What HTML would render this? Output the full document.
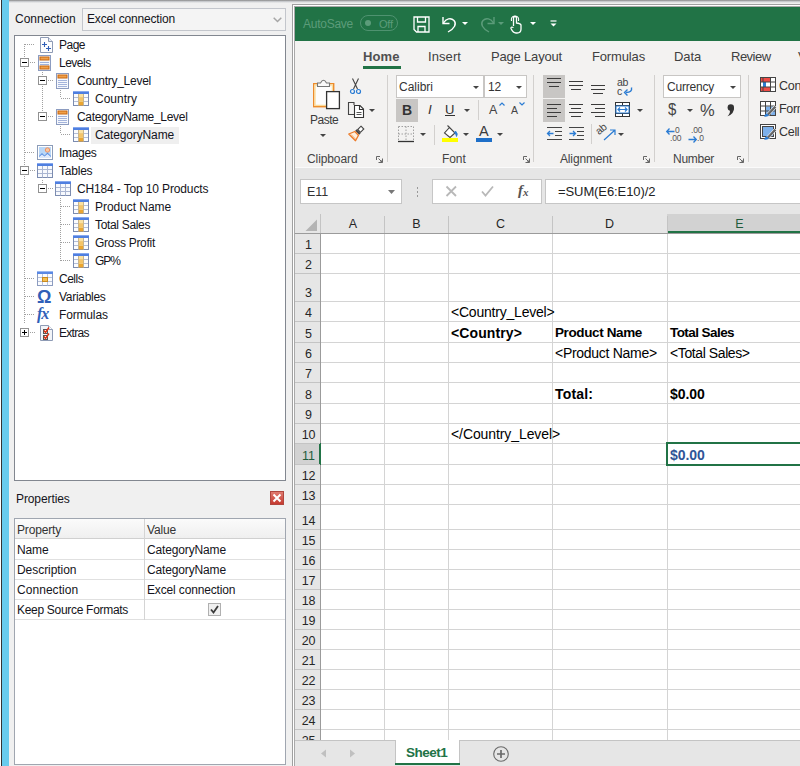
<!DOCTYPE html>
<html><head><meta charset="utf-8">
<style>
*{box-sizing:border-box;margin:0;padding:0}
html,body{width:800px;height:766px;overflow:hidden;background:#f0f0f0;font-family:"Liberation Sans",sans-serif;font-size:12px;color:#141420}
.a{position:absolute}
.t{position:absolute;white-space:nowrap;line-height:1}
svg{position:absolute;overflow:visible}
.hd{height:1px;background:repeating-linear-gradient(90deg,#a0a0a0 0 1px,transparent 1px 2px)}
.vd{width:1px;background:repeating-linear-gradient(180deg,#a0a0a0 0 1px,transparent 1px 2px)}
.x{font-family:"Liberation Sans",sans-serif;color:#262626}
.c{font-family:"Liberation Sans",sans-serif;font-size:14px;color:#000;letter-spacing:-0.3px}
.rh{position:absolute;left:296px;width:25px;text-align:center;font-size:12.5px;color:#262626;line-height:16px;letter-spacing:-0.1px}
</style></head><body>
<!-- LEFT PANEL -->
<div class="a" style="left:0;top:0;width:293px;height:766px;background:#f0f0f0"></div>
<div class="a" style="left:9px;top:0;width:791px;height:3px;background:linear-gradient(#858585,#c4c6ca 45%,#f0f0f0)"></div>
<div class="a" style="left:0;top:0;width:1px;height:766px;background:#fff"></div>
<div class="a" style="left:1px;top:0;width:1px;height:766px;background:#333"></div>
<div class="a" style="left:2px;top:0;width:7px;height:766px;background:#68cbed"></div>
<div class="t" style="left:15px;top:13px">Connection</div>
<div class="a" style="left:82px;top:8px;width:204px;height:23px;border:1px solid #c3c6cc;background:#f4f4f4"></div>
<div class="t" style="left:87px;top:13px;letter-spacing:-0.17px">Excel connection</div>
<svg style="left:273px;top:17px" width="9" height="6"><path d="M0.7 0.7 L4.5 4.5 L8.3 0.7" fill="none" stroke="#a6a6a6" stroke-width="1.5"/></svg>
<div class="a" style="left:14px;top:35px;width:272px;height:446px;border:1px solid #828790;background:#fff"></div>
<div class="a" style="left:91px;top:127px;width:88px;height:17px;background:#efefef"></div>
<div class="a vd" style="left:24px;top:44px;height:280px"></div>
<div class="a vd" style="left:42px;top:72px;height:40px"></div>
<div class="a vd" style="left:42px;top:112px;height:0px"></div>
<div class="a vd" style="left:60px;top:90px;height:8px"></div>
<div class="a vd" style="left:60px;top:126px;height:8px"></div>
<div class="a vd" style="left:42px;top:180px;height:4px"></div>
<div class="a vd" style="left:60px;top:198px;height:63px"></div>
<div class="a hd" style="left:25px;top:44px;width:9px"></div>
<svg style="left:39.5px;top:37px" width="13" height="16" viewBox="0 0 13 16"><path d="M0.5 0.5 H8.5 L12.5 4.5 V15.5 H0.5 Z" fill="#fdfdfe" stroke="#8e9bb5"/><path d="M8.5 0.5 V4.5 H12.5" fill="#e8ecf4" stroke="#8e9bb5"/><path d="M2 7.5 H7 M4.5 5 V10 M6 11.5 H11 M8.5 9 V14" stroke="#2f5fb8" stroke-width="1.1" fill="none"/></svg>
<div class="t" style="left:59px;top:36px;line-height:18px;letter-spacing:-0.5px">Page</div>
<div class="a hd" style="left:30px;top:62px;width:5px"></div>
<div class="a" style="left:20px;top:58px;width:9px;height:9px;border:1px solid #919191;background:#fff"></div><div class="a" style="left:22px;top:62px;width:5px;height:1px;background:#000"></div>
<svg style="left:38px;top:55px" width="13" height="16" viewBox="0 0 13 16"><rect x="0.5" y="0.5" width="12" height="15" fill="#f4f7fc" stroke="#8c9cc0"/><rect x="2" y="2" width="9" height="3" fill="#f0a04a" stroke="#c8660e" stroke-width="1"/><rect x="2" y="11" width="9" height="3" fill="#f0a04a" stroke="#c8660e" stroke-width="1"/><path d="M2 7.5 H11 M2 9.5 H11" stroke="#9fb2dc" stroke-width="1"/></svg>
<div class="t" style="left:59px;top:54px;line-height:18px;letter-spacing:-0.5px">Levels</div>
<div class="a hd" style="left:48px;top:80px;width:5px"></div>
<div class="a" style="left:38px;top:76px;width:9px;height:9px;border:1px solid #919191;background:#fff"></div><div class="a" style="left:40px;top:80px;width:5px;height:1px;background:#000"></div>
<svg style="left:56px;top:73px" width="13" height="16" viewBox="0 0 13 16"><rect x="0.5" y="0.5" width="12" height="15" fill="#f6f8fc" stroke="#8c9cc0"/><rect x="2" y="2" width="9" height="3" fill="#f0a04a" stroke="#c8660e" stroke-width="1"/><path d="M2 7.5 H11 M2 9.5 H11 M2 11.5 H11 M2 13.5 H11" stroke="#a4b4dc" stroke-width="1"/></svg>
<div class="t" style="left:77px;top:72px;line-height:18px;letter-spacing:-0.26px">Country_Level</div>
<div class="a hd" style="left:61px;top:98px;width:9px"></div>
<svg style="left:73px;top:91px" width="16" height="15" viewBox="0 0 16 15"><rect x="0.5" y="0.5" width="15" height="14" fill="#fbfcfe" stroke="#7c8cb0"/><path d="M1 6.5 H15 M1 10.5 H15" stroke="#b4bed6" stroke-width="1" fill="none"/><rect x="5.5" y="3" width="5" height="3.5" fill="#fae0a0"/><rect x="5.5" y="6.5" width="5" height="4" fill="#f4c468"/><rect x="5.5" y="10.5" width="5" height="4" fill="#eba530"/><path d="M5.5 3 V14.5 M10.5 3 V14.5" stroke="#c8b48c" stroke-width="1" fill="none"/><path d="M6 6.5 H10 M6 10.5 H10" stroke="#f0c878" stroke-width="1" fill="none"/><rect x="0" y="0" width="16" height="3" fill="#4f7fe0"/><rect x="0" y="0" width="16" height="1" fill="#86a8ee"/></svg>
<div class="t" style="left:95px;top:90px;line-height:18px;letter-spacing:0px">Country</div>
<div class="a hd" style="left:48px;top:116px;width:5px"></div>
<div class="a" style="left:38px;top:112px;width:9px;height:9px;border:1px solid #919191;background:#fff"></div><div class="a" style="left:40px;top:116px;width:5px;height:1px;background:#000"></div>
<svg style="left:56px;top:109px" width="13" height="16" viewBox="0 0 13 16"><rect x="0.5" y="0.5" width="12" height="15" fill="#f6f8fc" stroke="#8c9cc0"/><rect x="2" y="2" width="9" height="3" fill="#f0a04a" stroke="#c8660e" stroke-width="1"/><path d="M2 7.5 H11 M2 9.5 H11 M2 11.5 H11 M2 13.5 H11" stroke="#a4b4dc" stroke-width="1"/></svg>
<div class="t" style="left:77px;top:108px;line-height:18px;letter-spacing:-0.31px">CategoryName_Level</div>
<div class="a hd" style="left:61px;top:134px;width:9px"></div>
<svg style="left:73px;top:127px" width="16" height="15" viewBox="0 0 16 15"><rect x="0.5" y="0.5" width="15" height="14" fill="#fbfcfe" stroke="#7c8cb0"/><path d="M1 6.5 H15 M1 10.5 H15" stroke="#b4bed6" stroke-width="1" fill="none"/><rect x="5.5" y="3" width="5" height="3.5" fill="#fae0a0"/><rect x="5.5" y="6.5" width="5" height="4" fill="#f4c468"/><rect x="5.5" y="10.5" width="5" height="4" fill="#eba530"/><path d="M5.5 3 V14.5 M10.5 3 V14.5" stroke="#c8b48c" stroke-width="1" fill="none"/><path d="M6 6.5 H10 M6 10.5 H10" stroke="#f0c878" stroke-width="1" fill="none"/><rect x="0" y="0" width="16" height="3" fill="#4f7fe0"/><rect x="0" y="0" width="16" height="1" fill="#86a8ee"/></svg>
<div class="t" style="left:95px;top:126px;line-height:18px;letter-spacing:-0.14px">CategoryName</div>
<div class="a hd" style="left:25px;top:152px;width:9px"></div>
<svg style="left:37px;top:145px" width="16" height="15" viewBox="0 0 16 15"><rect x="0.5" y="0.5" width="15" height="14" fill="#fff" stroke="#8c9cb8"/><rect x="2" y="2" width="12" height="11" fill="#b9d7f7"/><circle cx="10.5" cy="5" r="2.2" fill="#f9c8a0" stroke="#f09060" stroke-width="1"/><path d="M2 11 L5 8 L7.5 10.5 L10.5 7.5 L14 11 V13 H2 Z" fill="#5b8ee0"/><path d="M2 12 L5 9.5 L7.5 11.5 L10.5 9 L14 12 V13 H2Z" fill="#dfe9fa"/></svg>
<div class="t" style="left:59px;top:144px;line-height:18px;letter-spacing:-0.32px">Images</div>
<div class="a hd" style="left:30px;top:170px;width:5px"></div>
<div class="a" style="left:20px;top:166px;width:9px;height:9px;border:1px solid #919191;background:#fff"></div><div class="a" style="left:22px;top:170px;width:5px;height:1px;background:#000"></div>
<svg style="left:37px;top:163px" width="16" height="15" viewBox="0 0 16 15"><rect x="0.5" y="0.5" width="15" height="14" fill="#f7f9fd" stroke="#7c8cb0"/><path d="M5.5 3 V14.5 M10.5 3 V14.5 M1 6.5 H15 M1 10.5 H15" stroke="#aab6d2" stroke-width="1" fill="none"/><rect x="0" y="0" width="16" height="3" fill="#4f7fe0"/><rect x="0" y="0" width="16" height="1" fill="#86a8ee"/></svg>
<div class="t" style="left:59px;top:162px;line-height:18px;letter-spacing:-0.22px">Tables</div>
<div class="a hd" style="left:48px;top:188px;width:5px"></div>
<div class="a" style="left:38px;top:184px;width:9px;height:9px;border:1px solid #919191;background:#fff"></div><div class="a" style="left:40px;top:188px;width:5px;height:1px;background:#000"></div>
<svg style="left:55px;top:181px" width="16" height="15" viewBox="0 0 16 15"><rect x="0.5" y="0.5" width="15" height="14" fill="#f7f9fd" stroke="#7c8cb0"/><path d="M5.5 3 V14.5 M10.5 3 V14.5 M1 6.5 H15 M1 10.5 H15" stroke="#aab6d2" stroke-width="1" fill="none"/><rect x="0" y="0" width="16" height="3" fill="#4f7fe0"/><rect x="0" y="0" width="16" height="1" fill="#86a8ee"/></svg>
<div class="t" style="left:77px;top:180px;line-height:18px;letter-spacing:-0.14px">CH184 - Top 10 Products</div>
<div class="a hd" style="left:61px;top:206px;width:9px"></div>
<svg style="left:73px;top:199px" width="16" height="15" viewBox="0 0 16 15"><rect x="0.5" y="0.5" width="15" height="14" fill="#fbfcfe" stroke="#7c8cb0"/><path d="M1 6.5 H15 M1 10.5 H15" stroke="#b4bed6" stroke-width="1" fill="none"/><rect x="5.5" y="3" width="5" height="3.5" fill="#fae0a0"/><rect x="5.5" y="6.5" width="5" height="4" fill="#f4c468"/><rect x="5.5" y="10.5" width="5" height="4" fill="#eba530"/><path d="M5.5 3 V14.5 M10.5 3 V14.5" stroke="#c8b48c" stroke-width="1" fill="none"/><path d="M6 6.5 H10 M6 10.5 H10" stroke="#f0c878" stroke-width="1" fill="none"/><rect x="0" y="0" width="16" height="3" fill="#4f7fe0"/><rect x="0" y="0" width="16" height="1" fill="#86a8ee"/></svg>
<div class="t" style="left:95px;top:198px;line-height:18px;letter-spacing:-0.05px">Product Name</div>
<div class="a hd" style="left:61px;top:224px;width:9px"></div>
<svg style="left:73px;top:217px" width="16" height="15" viewBox="0 0 16 15"><rect x="0.5" y="0.5" width="15" height="14" fill="#fbfcfe" stroke="#7c8cb0"/><path d="M1 6.5 H15 M1 10.5 H15" stroke="#b4bed6" stroke-width="1" fill="none"/><rect x="5.5" y="3" width="5" height="3.5" fill="#fae0a0"/><rect x="5.5" y="6.5" width="5" height="4" fill="#f4c468"/><rect x="5.5" y="10.5" width="5" height="4" fill="#eba530"/><path d="M5.5 3 V14.5 M10.5 3 V14.5" stroke="#c8b48c" stroke-width="1" fill="none"/><path d="M6 6.5 H10 M6 10.5 H10" stroke="#f0c878" stroke-width="1" fill="none"/><rect x="0" y="0" width="16" height="3" fill="#4f7fe0"/><rect x="0" y="0" width="16" height="1" fill="#86a8ee"/></svg>
<div class="t" style="left:95px;top:216px;line-height:18px;letter-spacing:-0.33px">Total Sales</div>
<div class="a hd" style="left:61px;top:242px;width:9px"></div>
<svg style="left:73px;top:235px" width="16" height="15" viewBox="0 0 16 15"><rect x="0.5" y="0.5" width="15" height="14" fill="#fbfcfe" stroke="#7c8cb0"/><path d="M1 6.5 H15 M1 10.5 H15" stroke="#b4bed6" stroke-width="1" fill="none"/><rect x="5.5" y="3" width="5" height="3.5" fill="#fae0a0"/><rect x="5.5" y="6.5" width="5" height="4" fill="#f4c468"/><rect x="5.5" y="10.5" width="5" height="4" fill="#eba530"/><path d="M5.5 3 V14.5 M10.5 3 V14.5" stroke="#c8b48c" stroke-width="1" fill="none"/><path d="M6 6.5 H10 M6 10.5 H10" stroke="#f0c878" stroke-width="1" fill="none"/><rect x="0" y="0" width="16" height="3" fill="#4f7fe0"/><rect x="0" y="0" width="16" height="1" fill="#86a8ee"/></svg>
<div class="t" style="left:95px;top:234px;line-height:18px;letter-spacing:-0.28px">Gross Profit</div>
<div class="a hd" style="left:61px;top:260px;width:9px"></div>
<svg style="left:73px;top:253px" width="16" height="15" viewBox="0 0 16 15"><rect x="0.5" y="0.5" width="15" height="14" fill="#fbfcfe" stroke="#7c8cb0"/><path d="M1 6.5 H15 M1 10.5 H15" stroke="#b4bed6" stroke-width="1" fill="none"/><rect x="5.5" y="3" width="5" height="3.5" fill="#fae0a0"/><rect x="5.5" y="6.5" width="5" height="4" fill="#f4c468"/><rect x="5.5" y="10.5" width="5" height="4" fill="#eba530"/><path d="M5.5 3 V14.5 M10.5 3 V14.5" stroke="#c8b48c" stroke-width="1" fill="none"/><path d="M6 6.5 H10 M6 10.5 H10" stroke="#f0c878" stroke-width="1" fill="none"/><rect x="0" y="0" width="16" height="3" fill="#4f7fe0"/><rect x="0" y="0" width="16" height="1" fill="#86a8ee"/></svg>
<div class="t" style="left:95px;top:252px;line-height:18px;letter-spacing:-1.0px">GP%</div>
<div class="a hd" style="left:25px;top:278px;width:9px"></div>
<svg style="left:37px;top:271px" width="16" height="15" viewBox="0 0 16 15"><rect x="0.5" y="0.5" width="15" height="14" fill="#fbfcfe" stroke="#8c9cc0"/><path d="M5.5 3 V14.5 M10.5 3 V14.5 M1 6.5 H15 M1 10.5 H15" stroke="#b8c2da" stroke-width="1" fill="none"/><rect x="5.5" y="6.5" width="5" height="4" fill="#f6c050" stroke="#c88a20"/><rect x="0" y="0" width="16" height="3" fill="#5a88e4"/><rect x="0" y="0" width="16" height="1" fill="#9ab8f2"/></svg>
<div class="t" style="left:59px;top:270px;line-height:18px;letter-spacing:-0.5px">Cells</div>
<div class="a hd" style="left:25px;top:296px;width:9px"></div>
<div class="t" style="left:37px;top:288px;font:bold 18px 'Liberation Sans',sans-serif;color:#2f5fb8;line-height:18px">Ω</div>
<div class="t" style="left:59px;top:288px;line-height:18px;letter-spacing:-0.29px">Variables</div>
<div class="a hd" style="left:25px;top:314px;width:9px"></div>
<div class="t" style="left:37px;top:305px;font:italic bold 16px 'Liberation Serif',serif;color:#2f5fb8;line-height:18px;letter-spacing:-1px">fx</div>
<div class="t" style="left:59px;top:306px;line-height:18px;letter-spacing:-0.16px">Formulas</div>
<div class="a hd" style="left:30px;top:332px;width:5px"></div>
<div class="a" style="left:20px;top:328px;width:9px;height:9px;border:1px solid #919191;background:#fff"></div><div class="a" style="left:22px;top:332px;width:5px;height:1px;background:#000"></div><div class="a" style="left:24px;top:330px;width:1px;height:5px;background:#000"></div>
<svg style="left:39.5px;top:325px" width="13" height="16" viewBox="0 0 13 16"><path d="M0.5 0.5 H8.5 L12.5 4.5 V15.5 H0.5 Z" fill="#f2f4f8" stroke="#8e9bb5"/><path d="M8.5 0.5 V4.5 H12.5" fill="#fff" stroke="#8e9bb5"/><rect x="3.5" y="4.5" width="4" height="4" fill="#fff" stroke="#555"/><rect x="3.5" y="10.5" width="4" height="4" fill="#fff" stroke="#555"/><path d="M4 5.5 L5.5 7.5 L9 2.5 M4 11.5 L5.5 13.5 L9 8.5" stroke="#e03010" stroke-width="1.4" fill="none"/></svg>
<div class="t" style="left:59px;top:324px;line-height:18px;letter-spacing:-0.7px">Extras</div>
<div class="t" style="left:16px;top:493px;letter-spacing:-0.1px">Properties</div>
<div class="a" style="left:270px;top:491px;width:14px;height:14px;background:linear-gradient(#df7b70,#c63a30);border:1px solid #b0463e"></div>
<svg style="left:270px;top:491px" width="14" height="14"><path d="M3.5 3.5 L10.5 10.5 M10.5 3.5 L3.5 10.5" stroke="#fff" stroke-width="2"/></svg>
<div class="a" style="left:14px;top:518px;width:272px;height:247px;border:1px solid #a0a6b0;background:#fff"></div>
<div class="a" style="left:15px;top:519px;width:270px;height:20px;background:linear-gradient(#fbfbfb,#efefef);border-bottom:1px solid #d0d0d0"></div>
<div class="a" style="left:15px;top:559px;width:270px;height:1px;background:#e0e0e0"></div>
<div class="a" style="left:15px;top:579px;width:270px;height:1px;background:#e0e0e0"></div>
<div class="a" style="left:15px;top:599px;width:270px;height:1px;background:#e0e0e0"></div>
<div class="a" style="left:15px;top:619px;width:270px;height:1px;background:#e0e0e0"></div>
<div class="a" style="left:144px;top:519px;width:1px;height:101px;background:#d4d4d4"></div>
<div class="t" style="left:17px;top:524px;letter-spacing:-0.15px;color:#333">Property</div>
<div class="t" style="left:147px;top:524px;letter-spacing:-0.15px;color:#333">Value</div>
<div class="t" style="left:17px;top:544px;letter-spacing:-0.15px">Name</div>
<div class="t" style="left:147px;top:544px;letter-spacing:-0.15px">CategoryName</div>
<div class="t" style="left:17px;top:564px;letter-spacing:-0.05px">Description</div>
<div class="t" style="left:147px;top:564px;letter-spacing:-0.15px">CategoryName</div>
<div class="t" style="left:17px;top:584px;letter-spacing:0.05px">Connection</div>
<div class="t" style="left:147px;top:584px;letter-spacing:-0.15px">Excel connection</div>
<div class="t" style="left:17px;top:604px;letter-spacing:-0.3px">Keep Source Formats</div>
<div class="a" style="left:208px;top:603px;width:13px;height:13px;border:1px solid #b0b0b0;background:#f0f0f0"></div>
<svg style="left:208px;top:603px" width="13" height="13"><path d="M3 6.5 L5.5 9.5 L10 3" stroke="#3a3a3a" stroke-width="1.8" fill="none"/></svg>
<!-- EXCEL -->
<div class="a" style="left:292px;top:4px;width:508px;height:762px;background:#fff;border-left:1px solid #a0a0a0;border-top:1px solid #a0a0a0"></div>
<div class="a" style="left:294px;top:6px;width:506px;height:760px;background:#fff;border-left:1px solid #a9a9a9;border-top:1px solid #a9a9a9"></div>
<div class="a" style="left:295px;top:7px;width:505px;height:34px;background:#217346;"></div>
<div class="t" style="left:303px;top:18px;font-size:12px;color:#5c9c7a;font-weight:400;letter-spacing:-0.25px;">AutoSave</div>
<div class="a" style="left:360px;top:15px;width:38px;height:16px;border:1px solid #4f9270;border-radius:8px"></div>
<div class="a" style="left:365px;top:20px;width:6px;height:6px;border-radius:3px;background:#5c9c7a"></div>
<div class="t" style="left:379px;top:19px;font-size:11px;color:#5c9c7a;font-weight:400;letter-spacing:-0.2px;">Off</div>
<svg style="left:413px;top:16px" width="17" height="17" viewBox="0 0 17 17"><path d="M1 1 H16 V16 H3.5 L1 13.5 Z" fill="none" stroke="#fff" stroke-width="1.3"/><path d="M4.5 1 V6 H12.5 V1 M5 16 V10.5 H12 V16" fill="none" stroke="#fff" stroke-width="1.3"/></svg>
<svg style="left:441px;top:15px" width="18" height="18" viewBox="0 0 18 18"><path d="M2 2 V8.5 H8.5" fill="none" stroke="#fff" stroke-width="1.4"/><path d="M2.5 8 C5 3.5 10 2.5 13 5.5 C16 9 13.5 13.5 7 17" fill="none" stroke="#fff" stroke-width="1.4"/></svg>
<svg style="left:462px;top:21.5px" width="6" height="3" viewBox="0 0 6 3"><path d="M0 0 H6 L3 3 Z" fill="#fff"/></svg>
<svg style="left:478px;top:15px" width="18" height="18" viewBox="0 0 18 18"><path d="M16 2 V8.5 H9.5" fill="none" stroke="#5c9c7a" stroke-width="1.4"/><path d="M15.5 8 C13 3.500 8 2.5 5 5.5 C2 9 4.500 13.5 11 17" fill="none" stroke="#5c9c7a" stroke-width="1.4"/></svg>
<svg style="left:498px;top:21.5px" width="6" height="3" viewBox="0 0 6 3"><path d="M0 0 H6 L3 3 Z" fill="#5c9c7a"/></svg>
<svg style="left:509px;top:15px" width="14" height="19" viewBox="0 0 14 19"><path d="M4.5 11 V3 Q4.500 1.5 6 1.5 Q7.500 1.500 7.500 3 V8 Q11.500 8.500 12 10 V14 Q12 18 8 18 H7 Q4 18 2 13.500 Q1.5 11.500 4.500 12.500" fill="none" stroke="#fff" stroke-width="1.3"/><path d="M2.5 6 Q1.5 1.5 6 1 Q10.500 1.500 9.500 6" fill="none" stroke="#fff" stroke-width="1.1"/></svg>
<svg style="left:530px;top:21.5px" width="6" height="3" viewBox="0 0 6 3"><path d="M0 0 H6 L3 3 Z" fill="#fff"/></svg>
<svg style="left:550px;top:20px" width="8" height="8" viewBox="0 0 8 8"><path d="M0.5 1 H6.500" stroke="#fff" stroke-width="1.2"/><path d="M0.500 3.500 H6.500 L3.500 6.500 Z" fill="#fff"/></svg>
<div class="a" style="left:295px;top:41px;width:505px;height:126px;background:#f3f2f1;"></div>
<div class="t" style="left:363px;top:50px;font-size:13px;color:#505050;font-weight:700;letter-spacing:0.1px;">Home</div>
<div class="t" style="left:428px;top:50px;font-size:13px;color:#404040;font-weight:400;letter-spacing:0.08px;">Insert</div>
<div class="t" style="left:491px;top:50px;font-size:13px;color:#404040;font-weight:400;letter-spacing:-0.18px;">Page Layout</div>
<div class="t" style="left:592px;top:50px;font-size:13px;color:#404040;font-weight:400;letter-spacing:-0.15px;">Formulas</div>
<div class="t" style="left:674px;top:50px;font-size:13px;color:#404040;font-weight:400;letter-spacing:-0.1px;">Data</div>
<div class="t" style="left:731px;top:50px;font-size:13px;color:#404040;font-weight:400;letter-spacing:-0.5px;">Review</div>
<div class="t" style="left:798px;top:50px;font-size:13px;color:#404040;font-weight:400;letter-spacing:0px;">View</div>
<div class="a" style="left:363px;top:66px;width:38px;height:3px;background:#217346;"></div>
<svg style="left:312px;top:78px" width="29" height="32" viewBox="0 0 29 32"><rect x="1.7" y="5.700" width="20" height="23" fill="#fdfdfd" stroke="#ed8b2b" stroke-width="1.400"/><rect x="3" y="7" width="17.400" height="20.400" fill="none" stroke="#fbdc9a" stroke-width="1.300"/><path d="M5.500 8.500 V5 H8.500 Q11.500 -0.500 14.500 5 H17.500 V8.500 Z" fill="#fafafa" stroke="#767676" stroke-width="1.1"/><rect x="14.600" y="13.600" width="12.800" height="17" fill="#fff" stroke="#333" stroke-width="1.300"/></svg>
<div class="t" style="left:310px;top:114px;font-size:12px;color:#3b3b3b;font-weight:400;letter-spacing:-0.5px;">Paste</div>
<svg style="left:320px;top:133.5px" width="6" height="3" viewBox="0 0 6 3"><path d="M0 0 H6 L3 3 Z" fill="#444"/></svg>
<svg style="left:350px;top:78px" width="11" height="17" viewBox="0 0 11 17"><path d="M2.500 0.500 L7.500 11 M8.500 0.500 L3.500 11" stroke="#444" stroke-width="1.1" fill="none"/><circle cx="2.500" cy="13.500" r="2" fill="none" stroke="#2b7cd3" stroke-width="1.2"/><circle cx="8.500" cy="13.500" r="2" fill="none" stroke="#2b7cd3" stroke-width="1.2"/></svg>
<svg style="left:348px;top:101px" width="17" height="18" viewBox="0 0 17 18"><path d="M6 4 V1.500 H0.500 V13.500 H6" fill="none" stroke="#444" stroke-width="1.1"/><path d="M6.500 4.500 H12 L15.500 8 V16.500 H6.500 Z" fill="#fff" stroke="#333" stroke-width="1.1"/><path d="M11.500 4.500 V8.500 H15.500" fill="none" stroke="#333" stroke-width="1.1"/><path d="M8.500 11.500 H13.500 M8.500 13.500 H13.500" stroke="#555" stroke-width="1"/></svg>
<svg style="left:369px;top:108.5px" width="6" height="3" viewBox="0 0 6 3"><path d="M0 0 H6 L3 3 Z" fill="#444"/></svg>
<svg style="left:348px;top:125px" width="17" height="17" viewBox="0 0 17 17"><path d="M13 1.200 L15.800 4 L12.500 7.300 L9.700 4.500 Z" fill="#fff" stroke="#444" stroke-width="1.1"/><path d="M8.700 4.300 L12.700 8.300 L11.200 9.800 L7.200 5.800 Z" fill="#444"/><path d="M6.800 6.500 L10.500 10.200 L7.500 15.800 L0.800 9 Z" fill="#fdeedd" stroke="#ec7a28" stroke-width="1.300" stroke-linejoin="round"/><path d="M3 9.500 L7.500 14" stroke="#f4a868" stroke-width="1"/></svg>
<div class="t" style="left:307px;top:153px;font-size:12px;color:#444;font-weight:400;letter-spacing:-0.1px;">Clipboard</div>
<svg style="left:376px;top:156px" width="7" height="7" viewBox="0 0 7 7"><path d="M0.5 4 V0.5 H4 M6.5 2.5 V6.5 H2.5 M2.5 2.5 L6 6" stroke="#666" stroke-width="1" fill="none"/><path d="M6.5 3.5 V6.5 H3.5 Z" fill="#666"/></svg>
<div class="a" style="left:387px;top:75px;width:1px;height:87px;background:#d2d0ce;"></div>
<div class="a" style="left:396px;top:75px;width:88px;height:23px;background:#fff;border:1px solid #c8c6c4"></div>
<div class="a" style="left:484px;top:75px;width:43px;height:23px;background:#fff;border:1px solid #c8c6c4;border-left:none"></div>
<div class="a" style="left:484px;top:75px;width:1px;height:23px;background:#c8c6c4;"></div>
<div class="t" style="left:399px;top:81px;font-size:12px;color:#333;font-weight:400;letter-spacing:0px;">Calibri</div>
<svg style="left:473px;top:85.5px" width="6" height="3" viewBox="0 0 6 3"><path d="M0 0 H6 L3 3 Z" fill="#444"/></svg>
<div class="t" style="left:488px;top:81px;font-size:12px;color:#333;font-weight:400;letter-spacing:-0.2px;">12</div>
<svg style="left:516px;top:85.5px" width="6" height="3" viewBox="0 0 6 3"><path d="M0 0 H6 L3 3 Z" fill="#444"/></svg>
<div class="a" style="left:396px;top:99px;width:22px;height:23px;background:#c8c6c4;"></div>
<div class="t" style="left:402px;top:103px;font-size:14px;color:#333;font-weight:700;letter-spacing:0px;">B</div>
<div class="t" style="left:428px;top:103px;font-size:13.5px;color:#333;font-weight:400;letter-spacing:0px;font-style:italic">I</div>
<div class="t" style="left:445px;top:103px;font-size:13px;color:#333;font-weight:400;letter-spacing:0px;">U</div>
<div class="a" style="left:445px;top:115px;width:10px;height:1px;background:#333;"></div>
<svg style="left:464px;top:108.5px" width="6" height="3" viewBox="0 0 6 3"><path d="M0 0 H6 L3 3 Z" fill="#444"/></svg>
<div class="a" style="left:478px;top:100px;width:1px;height:20px;background:#d2d0ce;"></div>
<div class="t" style="left:489px;top:104px;font-size:12.5px;color:#444;font-weight:400;letter-spacing:0px;">A</div>
<svg style="left:499px;top:102px" width="6" height="4" viewBox="0 0 6 4"><path d="M0.500 3.500 L3 1 L5.500 3.500" fill="none" stroke="#2b7cd3" stroke-width="1.2"/></svg>
<div class="t" style="left:511px;top:105px;font-size:10.5px;color:#444;font-weight:400;letter-spacing:0px;">A</div>
<svg style="left:519px;top:102px" width="6" height="4" viewBox="0 0 6 4"><path d="M0.500 0.500 L3 3 L5.500 0.500" fill="none" stroke="#2b7cd3" stroke-width="1.2"/></svg>
<svg style="left:398px;top:126px" width="17" height="17" viewBox="0 0 17 17"><path d="M0.500 0.500 H15.500 M0.500 0.500 V15 M15.500 0.500 V15 M8 0.500 V15 M0.500 8 H15.500" stroke="#a0a0a0" stroke-width="1" stroke-dasharray="1.500 1.500" fill="none"/><path d="M0 15.500 H16" stroke="#333" stroke-width="1.300"/></svg>
<svg style="left:420px;top:132.5px" width="6" height="3" viewBox="0 0 6 3"><path d="M0 0 H6 L3 3 Z" fill="#444"/></svg>
<div class="a" style="left:434px;top:125px;width:1px;height:20px;background:#d2d0ce;"></div>
<svg style="left:443px;top:125px" width="16" height="18" viewBox="0 0 16 18"><path d="M6.500 2.500 L12 8 L7 12.500 L1.500 8 Z" fill="#fff" stroke="#444" stroke-width="1.1"/><path d="M6.500 2.500 L4.500 0.500" stroke="#444" stroke-width="1.1"/><path d="M12.500 6 Q15.500 9 13.500 11.500 Q13 8.500 11.500 8 Z" fill="#2b7cd3" stroke="#2b7cd3" stroke-width="0.800"/><rect x="-1" y="13" width="16" height="4" fill="#ffff00"/></svg>
<svg style="left:463px;top:132.5px" width="6" height="3" viewBox="0 0 6 3"><path d="M0 0 H6 L3 3 Z" fill="#444"/></svg>
<div class="t" style="left:479px;top:124px;font-size:14.5px;color:#3b3b3b;font-weight:400;letter-spacing:0px;">A</div>
<div class="a" style="left:476px;top:138px;width:16px;height:4px;background:#1e6fc8;"></div>
<svg style="left:497px;top:132.5px" width="6" height="3" viewBox="0 0 6 3"><path d="M0 0 H6 L3 3 Z" fill="#444"/></svg>
<div class="t" style="left:442px;top:153px;font-size:12px;color:#444;font-weight:400;letter-spacing:-0.1px;">Font</div>
<svg style="left:523px;top:156px" width="7" height="7" viewBox="0 0 7 7"><path d="M0.5 4 V0.5 H4 M6.5 2.5 V6.5 H2.5 M2.5 2.5 L6 6" stroke="#666" stroke-width="1" fill="none"/><path d="M6.5 3.5 V6.5 H3.5 Z" fill="#666"/></svg>
<div class="a" style="left:533px;top:75px;width:1px;height:87px;background:#d2d0ce;"></div>
<div class="a" style="left:543px;top:75px;width:22px;height:23px;background:#c8c6c4;"></div>
<div class="a" style="left:543px;top:99px;width:22px;height:23px;background:#c8c6c4;"></div>
<div class="a" style="left:547px;top:78px;width:14px;height:1px;background:#3b3b3b;"></div><div class="a" style="left:547px;top:82px;width:14px;height:1px;background:#3b3b3b;"></div><div class="a" style="left:549px;top:86px;width:10px;height:1px;background:#3b3b3b;"></div>
<div class="a" style="left:569px;top:81px;width:14px;height:1px;background:#3b3b3b;"></div><div class="a" style="left:569px;top:85px;width:14px;height:1px;background:#3b3b3b;"></div><div class="a" style="left:571px;top:89px;width:10px;height:1px;background:#3b3b3b;"></div>
<div class="a" style="left:591px;top:85px;width:14px;height:1px;background:#3b3b3b;"></div><div class="a" style="left:591px;top:89px;width:14px;height:1px;background:#3b3b3b;"></div><div class="a" style="left:593px;top:93px;width:10px;height:1px;background:#3b3b3b;"></div>
<div class="t" style="left:617px;top:77px;font-size:10.5px;color:#444;font-weight:400;letter-spacing:-0.3px;">ab</div>
<div class="t" style="left:617px;top:86px;font-size:10.5px;color:#444;font-weight:400;letter-spacing:0px;">c</div>
<svg style="left:623px;top:87px" width="10" height="9" viewBox="0 0 10 9"><path d="M8.500 0.500 Q9.500 5.500 3 5.500" fill="none" stroke="#2b7cd3" stroke-width="1.4"/><path d="M4.500 2.500 L1.500 5.500 L4.500 8.500" fill="none" stroke="#2b7cd3" stroke-width="1.4"/></svg>
<div class="a" style="left:547px;top:104px;width:14px;height:1px;background:#3b3b3b;"></div><div class="a" style="left:547px;top:108px;width:10px;height:1px;background:#3b3b3b;"></div><div class="a" style="left:547px;top:112px;width:14px;height:1px;background:#3b3b3b;"></div><div class="a" style="left:547px;top:116px;width:10px;height:1px;background:#3b3b3b;"></div>
<div class="a" style="left:569px;top:104px;width:14px;height:1px;background:#3b3b3b;"></div><div class="a" style="left:571px;top:108px;width:10px;height:1px;background:#3b3b3b;"></div><div class="a" style="left:569px;top:112px;width:14px;height:1px;background:#3b3b3b;"></div><div class="a" style="left:571px;top:116px;width:10px;height:1px;background:#3b3b3b;"></div>
<div class="a" style="left:591px;top:104px;width:14px;height:1px;background:#3b3b3b;"></div><div class="a" style="left:595px;top:108px;width:10px;height:1px;background:#3b3b3b;"></div><div class="a" style="left:591px;top:112px;width:14px;height:1px;background:#3b3b3b;"></div><div class="a" style="left:595px;top:116px;width:10px;height:1px;background:#3b3b3b;"></div>
<svg style="left:615px;top:102px" width="15" height="15" viewBox="0 0 15 15"><rect x="0.500" y="0.500" width="14" height="14" fill="#fff" stroke="#333"/><path d="M0.500 3.500 H14.500 M0.500 11.500 H14.500 M7.500 0.500 V3.500 M7.500 11.500 V14.500" stroke="#333" fill="none"/><rect x="1" y="4" width="13" height="7" fill="#fff" stroke="#2b7cd3" stroke-width="1"/><path d="M3 7.500 H12 M5 5.500 L3 7.500 L5 9.500 M10 5.500 L12 7.500 L10 9.500" stroke="#2b7cd3" stroke-width="1.200" fill="none"/></svg>
<svg style="left:637px;top:108.5px" width="6" height="3" viewBox="0 0 6 3"><path d="M0 0 H6 L3 3 Z" fill="#444"/></svg>
<svg style="left:547px;top:127px" width="15" height="13" viewBox="0 0 15 13"><path d="M0 0.500 H15 M8 4.500 H15 M8 8.500 H15 M0 12.500 H15" stroke="#444" fill="none"/><path d="M6.500 6.500 H0.500 M3 4 L0.500 6.500 L3 9" stroke="#2b7cd3" stroke-width="1.300" fill="none"/></svg>
<svg style="left:569px;top:127px" width="15" height="13" viewBox="0 0 15 13"><path d="M0 0.500 H15 M8 4.500 H15 M8 8.500 H15 M0 12.500 H15" stroke="#444" fill="none"/><path d="M0.500 6.500 H6.500 M4 4 L6.500 6.500 L4 9" stroke="#2b7cd3" stroke-width="1.300" fill="none"/></svg>
<div class="a" style="left:591px;top:124px;width:1px;height:20px;background:#d2d0ce;"></div>
<div class="t" style="left:600px;top:126px;font-size:10.5px;color:#444;font-weight:400;letter-spacing:-0.3px;transform:rotate(-40deg);transform-origin:left bottom">ab</div>
<svg style="left:603px;top:129px" width="13" height="12" viewBox="0 0 13 12"><path d="M1 11 L11.500 1.500 M7 1 H12 V6" fill="none" stroke="#2b7cd3" stroke-width="1.200"/></svg>
<svg style="left:618px;top:132.5px" width="6" height="3" viewBox="0 0 6 3"><path d="M0 0 H6 L3 3 Z" fill="#444"/></svg>
<div class="t" style="left:560px;top:153px;font-size:12px;color:#444;font-weight:400;letter-spacing:-0.15px;">Alignment</div>
<svg style="left:643px;top:156px" width="7" height="7" viewBox="0 0 7 7"><path d="M0.5 4 V0.5 H4 M6.5 2.5 V6.5 H2.5 M2.5 2.5 L6 6" stroke="#666" stroke-width="1" fill="none"/><path d="M6.5 3.5 V6.5 H3.5 Z" fill="#666"/></svg>
<div class="a" style="left:654px;top:75px;width:1px;height:87px;background:#d2d0ce;"></div>
<div class="a" style="left:663px;top:75px;width:78px;height:23px;background:#fff;border:1px solid #c8c6c4"></div>
<div class="t" style="left:667px;top:81px;font-size:12px;color:#333;font-weight:400;letter-spacing:-0.2px;">Currency</div>
<svg style="left:730px;top:85.5px" width="6" height="3" viewBox="0 0 6 3"><path d="M0 0 H6 L3 3 Z" fill="#444"/></svg>
<div class="t" style="left:668px;top:101px;font-size:17px;color:#444;font-weight:400;letter-spacing:0px;transform:scaleX(0.88);transform-origin:left">$</div>
<svg style="left:687px;top:108.5px" width="6" height="3" viewBox="0 0 6 3"><path d="M0 0 H6 L3 3 Z" fill="#444"/></svg>
<div class="t" style="left:700px;top:102px;font-size:16.5px;color:#444;font-weight:400;letter-spacing:0px;">%</div>
<svg style="left:726px;top:104px" width="9" height="13" viewBox="0 0 9 13"><circle cx="4.800" cy="3.400" r="3.200" fill="#333"/><path d="M8 3.400 Q8.500 9.500 1.500 12.300 Q5 8.500 3.500 5.500 Z" fill="#333"/></svg>
<div class="t" style="left:675px;top:126px;font-size:8.5px;color:#555;font-weight:400;letter-spacing:0px;">0</div>
<div class="t" style="left:670px;top:134px;font-size:8.5px;color:#555;font-weight:400;letter-spacing:-0.2px;">.00</div>
<svg style="left:666px;top:128px" width="9" height="7" viewBox="0 0 9 7"><path d="M8.500 3.500 H1 M3.500 0.500 L0.700 3.500 L3.500 6.500" stroke="#2b7cd3" stroke-width="1.300" fill="none"/></svg>
<div class="t" style="left:691px;top:126px;font-size:8.5px;color:#555;font-weight:400;letter-spacing:-0.2px;">.00</div>
<div class="t" style="left:697px;top:134px;font-size:8.5px;color:#555;font-weight:400;letter-spacing:0px;">.0</div>
<svg style="left:688px;top:136px" width="9" height="7" viewBox="0 0 9 7"><path d="M0.500 3.500 H8 M5.500 0.500 L8.300 3.500 L5.500 6.500" stroke="#2b7cd3" stroke-width="1.300" fill="none"/></svg>
<div class="t" style="left:673px;top:153px;font-size:12px;color:#444;font-weight:400;letter-spacing:-0.28px;">Number</div>
<svg style="left:737px;top:156px" width="7" height="7" viewBox="0 0 7 7"><path d="M0.5 4 V0.5 H4 M6.5 2.5 V6.5 H2.5 M2.5 2.5 L6 6" stroke="#666" stroke-width="1" fill="none"/><path d="M6.5 3.5 V6.5 H3.5 Z" fill="#666"/></svg>
<div class="a" style="left:748px;top:75px;width:1px;height:87px;background:#d2d0ce;"></div>
<svg style="left:760px;top:77px" width="16" height="15" viewBox="0 0 16 15"><rect x="0.500" y="0.500" width="15" height="14" fill="#fff" stroke="#444"/><rect x="1" y="1" width="9" height="4" fill="#f04a45"/><rect x="1" y="10" width="9" height="4" fill="#f04a45"/><rect x="3" y="5" width="3" height="5" fill="#2b7cd3"/><path d="M0.500 5 H15.500 M0.500 10 H15.500 M10.500 0.500 V14.500 M3 0.500 V5 M3 10 V14.500" stroke="#444" fill="none"/></svg>
<div class="t" style="left:779px;top:80px;font-size:12.5px;color:#333;font-weight:400;letter-spacing:-0.3px;">Conditional</div>
<svg style="left:760px;top:101px" width="16" height="15" viewBox="0 0 16 15"><rect x="0.500" y="0.500" width="15" height="14" fill="#fff" stroke="#444"/><rect x="6" y="5.500" width="9" height="8.500" fill="#7db0ea"/><path d="M0.500 5 H15.500 M0.500 10 H15.500 M5.500 0.500 V14.500 M10.500 0.500 V14.500" stroke="#444" fill="none"/><path d="M6.500 13 L14.500 4.500 L16.500 6.500 L8.500 15 Z" fill="#666" stroke="#fff" stroke-width="0.700"/><path d="M4 15.500 Q5 12.500 7 12.500 L9 14.500 Q8 16 4 15.500 Z" fill="#2b7cd3"/></svg>
<div class="t" style="left:779px;top:103px;font-size:12.5px;color:#333;font-weight:400;letter-spacing:-0.3px;">Format</div>
<svg style="left:760px;top:124px" width="16" height="15" viewBox="0 0 16 15"><rect x="0.500" y="0.500" width="15" height="14" fill="#fff" stroke="#444"/><rect x="2.500" y="2.500" width="11" height="10" fill="#7db0ea" stroke="#444"/><path d="M6.500 13 L14.500 4.500 L16.500 6.500 L8.500 15 Z" fill="#666" stroke="#fff" stroke-width="0.700"/><path d="M4 15.500 Q5 12.500 7 12.500 L9 14.500 Q8 16 4 15.500 Z" fill="#2b7cd3"/></svg>
<div class="t" style="left:779px;top:126px;font-size:12.5px;color:#333;font-weight:400;letter-spacing:-0.3px;">Cell</div>
<div class="a" style="left:295px;top:167px;width:505px;height:1px;background:#fafafa;"></div>
<div class="a" style="left:295px;top:168px;width:505px;height:46px;background:#e6e6e6;"></div>
<div class="a" style="left:300px;top:179px;width:102px;height:25px;background:#fff;border:1px solid #c6c6c6"></div>
<div class="t" style="left:307px;top:186px;font-size:12.5px;color:#333;font-weight:400;letter-spacing:-0.1px;">E11</div>
<svg style="left:388px;top:190px" width="7" height="4" viewBox="0 0 7 4"><path d="M0 0 H7 L3.500 4 Z" fill="#777"/></svg>
<div class="a" style="left:417px;top:187px;width:1px;height:2px;background:#999;"></div>
<div class="a" style="left:417px;top:191px;width:1px;height:2px;background:#999;"></div>
<div class="a" style="left:417px;top:195px;width:1px;height:2px;background:#999;"></div>
<div class="a" style="left:432px;top:179px;width:110px;height:25px;background:#fff;border:1px solid #c6c6c6"></div>
<svg style="left:446px;top:186px" width="10" height="10" viewBox="0 0 10 10"><path d="M0.500 0.500 L10 10 M10 0.500 L0.500 10" stroke="#b8b8b8" stroke-width="1.800"/></svg>
<svg style="left:481px;top:186px" width="13" height="10" viewBox="0 0 13 10"><path d="M1 5.500 L4.500 9.500 L12 0.500" stroke="#b8b8b8" stroke-width="1.800" fill="none"/></svg>
<div class="t" style="left:518px;top:183px;font-size:15px;color:#555;font-weight:700;letter-spacing:0px;font-family:'Liberation Serif',serif;font-style:italic">f</div>
<div class="t" style="left:523px;top:187px;font-size:11px;color:#555;font-weight:700;letter-spacing:0px;font-family:'Liberation Serif',serif;font-style:italic">x</div>
<div class="a" style="left:545px;top:179px;width:255px;height:25px;background:#fff;border:1px solid #c6c6c6;border-right:none"></div>
<div class="t" style="left:558px;top:185px;font-size:13px;color:#222;font-weight:400;letter-spacing:-0.09px;">=SUM(E6:E10)/2</div>
<div class="a" style="left:295px;top:214px;width:505px;height:527px;background:#fff;"></div>
<div class="a" style="left:295px;top:214px;width:505px;height:19px;background:#e6e6e6;"></div>
<div class="a" style="left:295px;top:233px;width:505px;height:1px;background:#9b9b9b;"></div>
<svg style="left:305px;top:219px" width="13" height="13" viewBox="0 0 13 13"><path d="M12 0.500 V12 H0.500 Z" fill="#b4b4b4"/></svg>
<div class="a" style="left:667px;top:214px;width:133px;height:17px;background:#d2d2d2;"></div>
<div class="a" style="left:667px;top:231px;width:133px;height:2px;background:#217346;"></div>
<div class="a" style="left:295px;top:234px;width:26px;height:507px;background:#e6e6e6;"></div>
<div class="a" style="left:320px;top:214px;width:1px;height:527px;background:#9b9b9b;"></div>
<div class="a" style="left:320px;top:214px;width:1px;height:19px;background:#c4c4c4;"></div>
<div class="a" style="left:295px;top:444px;width:25px;height:20px;background:#d2d2d2;"></div>
<div class="a" style="left:319px;top:443px;width:2px;height:22px;background:#217346;"></div>
<div class="a" style="left:384px;top:234px;width:1px;height:507px;background:#d4d4d4;"></div>
<div class="a" style="left:384px;top:216px;width:1px;height:17px;background:#c4c4c4;"></div>
<div class="a" style="left:448px;top:234px;width:1px;height:507px;background:#d4d4d4;"></div>
<div class="a" style="left:448px;top:216px;width:1px;height:17px;background:#c4c4c4;"></div>
<div class="a" style="left:552px;top:234px;width:1px;height:507px;background:#d4d4d4;"></div>
<div class="a" style="left:552px;top:216px;width:1px;height:17px;background:#c4c4c4;"></div>
<div class="a" style="left:667px;top:234px;width:1px;height:507px;background:#d4d4d4;"></div>
<div class="a" style="left:667px;top:216px;width:1px;height:17px;background:#c4c4c4;"></div>
<div class="a" style="left:321px;top:253px;width:479px;height:1px;background:#d4d4d4;"></div>
<div class="a" style="left:295px;top:253px;width:25px;height:1px;background:#c4c4c4;"></div>
<div class="a" style="left:321px;top:273px;width:479px;height:1px;background:#d4d4d4;"></div>
<div class="a" style="left:295px;top:273px;width:25px;height:1px;background:#c4c4c4;"></div>
<div class="a" style="left:321px;top:301px;width:479px;height:1px;background:#d4d4d4;"></div>
<div class="a" style="left:295px;top:301px;width:25px;height:1px;background:#c4c4c4;"></div>
<div class="a" style="left:321px;top:321px;width:479px;height:1px;background:#d4d4d4;"></div>
<div class="a" style="left:295px;top:321px;width:25px;height:1px;background:#c4c4c4;"></div>
<div class="a" style="left:321px;top:342px;width:479px;height:1px;background:#d4d4d4;"></div>
<div class="a" style="left:295px;top:342px;width:25px;height:1px;background:#c4c4c4;"></div>
<div class="a" style="left:321px;top:362px;width:479px;height:1px;background:#d4d4d4;"></div>
<div class="a" style="left:295px;top:362px;width:25px;height:1px;background:#c4c4c4;"></div>
<div class="a" style="left:321px;top:382px;width:479px;height:1px;background:#d4d4d4;"></div>
<div class="a" style="left:295px;top:382px;width:25px;height:1px;background:#c4c4c4;"></div>
<div class="a" style="left:321px;top:403px;width:479px;height:1px;background:#d4d4d4;"></div>
<div class="a" style="left:295px;top:403px;width:25px;height:1px;background:#c4c4c4;"></div>
<div class="a" style="left:321px;top:423px;width:479px;height:1px;background:#d4d4d4;"></div>
<div class="a" style="left:295px;top:423px;width:25px;height:1px;background:#c4c4c4;"></div>
<div class="a" style="left:321px;top:443px;width:479px;height:1px;background:#d4d4d4;"></div>
<div class="a" style="left:295px;top:443px;width:25px;height:1px;background:#c4c4c4;"></div>
<div class="a" style="left:321px;top:464px;width:479px;height:1px;background:#d4d4d4;"></div>
<div class="a" style="left:295px;top:464px;width:25px;height:1px;background:#c4c4c4;"></div>
<div class="a" style="left:321px;top:484px;width:479px;height:1px;background:#d4d4d4;"></div>
<div class="a" style="left:295px;top:484px;width:25px;height:1px;background:#c4c4c4;"></div>
<div class="a" style="left:321px;top:504px;width:479px;height:1px;background:#d4d4d4;"></div>
<div class="a" style="left:295px;top:504px;width:25px;height:1px;background:#c4c4c4;"></div>
<div class="a" style="left:321px;top:529px;width:479px;height:1px;background:#d4d4d4;"></div>
<div class="a" style="left:295px;top:529px;width:25px;height:1px;background:#c4c4c4;"></div>
<div class="a" style="left:321px;top:549px;width:479px;height:1px;background:#d4d4d4;"></div>
<div class="a" style="left:295px;top:549px;width:25px;height:1px;background:#c4c4c4;"></div>
<div class="a" style="left:321px;top:569px;width:479px;height:1px;background:#d4d4d4;"></div>
<div class="a" style="left:295px;top:569px;width:25px;height:1px;background:#c4c4c4;"></div>
<div class="a" style="left:321px;top:589px;width:479px;height:1px;background:#d4d4d4;"></div>
<div class="a" style="left:295px;top:589px;width:25px;height:1px;background:#c4c4c4;"></div>
<div class="a" style="left:321px;top:609px;width:479px;height:1px;background:#d4d4d4;"></div>
<div class="a" style="left:295px;top:609px;width:25px;height:1px;background:#c4c4c4;"></div>
<div class="a" style="left:321px;top:629px;width:479px;height:1px;background:#d4d4d4;"></div>
<div class="a" style="left:295px;top:629px;width:25px;height:1px;background:#c4c4c4;"></div>
<div class="a" style="left:321px;top:649px;width:479px;height:1px;background:#d4d4d4;"></div>
<div class="a" style="left:295px;top:649px;width:25px;height:1px;background:#c4c4c4;"></div>
<div class="a" style="left:321px;top:669px;width:479px;height:1px;background:#d4d4d4;"></div>
<div class="a" style="left:295px;top:669px;width:25px;height:1px;background:#c4c4c4;"></div>
<div class="a" style="left:321px;top:689px;width:479px;height:1px;background:#d4d4d4;"></div>
<div class="a" style="left:295px;top:689px;width:25px;height:1px;background:#c4c4c4;"></div>
<div class="a" style="left:321px;top:709px;width:479px;height:1px;background:#d4d4d4;"></div>
<div class="a" style="left:295px;top:709px;width:25px;height:1px;background:#c4c4c4;"></div>
<div class="a" style="left:321px;top:729px;width:479px;height:1px;background:#d4d4d4;"></div>
<div class="a" style="left:295px;top:729px;width:25px;height:1px;background:#c4c4c4;"></div>
<div class="a" style="left:321px;top:749px;width:479px;height:1px;background:#d4d4d4;"></div>
<div class="a" style="left:295px;top:749px;width:25px;height:1px;background:#c4c4c4;"></div>
<div class="t" style="left:343px;top:218px;width:20px;text-align:center;font-size:12.5px;color:#262626">A</div>
<div class="t" style="left:406.5px;top:218px;width:20px;text-align:center;font-size:12.5px;color:#262626">B</div>
<div class="t" style="left:490.5px;top:218px;width:20px;text-align:center;font-size:12.5px;color:#262626">C</div>
<div class="t" style="left:599.5px;top:218px;width:20px;text-align:center;font-size:12.5px;color:#262626">D</div>
<div class="t" style="left:729.5px;top:218px;width:20px;text-align:center;font-size:12.5px;color:#1f5c3c">E</div>
<div class="rh" style="top:237px;color:#262626">1</div>
<div class="rh" style="top:257px;color:#262626">2</div>
<div class="rh" style="top:285px;color:#262626">3</div>
<div class="rh" style="top:305px;color:#262626">4</div>
<div class="rh" style="top:326px;color:#262626">5</div>
<div class="rh" style="top:346px;color:#262626">6</div>
<div class="rh" style="top:366px;color:#262626">7</div>
<div class="rh" style="top:387px;color:#262626">8</div>
<div class="rh" style="top:407px;color:#262626">9</div>
<div class="rh" style="top:427px;color:#262626">10</div>
<div class="rh" style="top:448px;color:#1f5c3c">11</div>
<div class="rh" style="top:468px;color:#262626">12</div>
<div class="rh" style="top:488px;color:#262626">13</div>
<div class="rh" style="top:513px;color:#262626">14</div>
<div class="rh" style="top:533px;color:#262626">15</div>
<div class="rh" style="top:553px;color:#262626">16</div>
<div class="rh" style="top:573px;color:#262626">17</div>
<div class="rh" style="top:593px;color:#262626">18</div>
<div class="rh" style="top:613px;color:#262626">19</div>
<div class="rh" style="top:633px;color:#262626">20</div>
<div class="rh" style="top:653px;color:#262626">21</div>
<div class="rh" style="top:673px;color:#262626">22</div>
<div class="rh" style="top:693px;color:#262626">23</div>
<div class="rh" style="top:713px;color:#262626">24</div>
<div class="rh" style="top:733px;color:#262626">25</div>
<div class="t c" style="left:451px;top:304px;font-weight:400;color:#000;letter-spacing:-0.21px;font-size:14px;line-height:16px">&lt;Country_Level&gt;</div>
<div class="t c" style="left:451px;top:325px;font-weight:700;color:#000;letter-spacing:0.11px;font-size:14px;line-height:16px">&lt;Country&gt;</div>
<div class="t c" style="left:555px;top:325px;font-weight:700;color:#000;letter-spacing:-0.38px;font-size:13.5px;line-height:16px">Product Name</div>
<div class="t c" style="left:670px;top:325px;font-weight:700;color:#000;letter-spacing:-0.57px;font-size:13.5px;line-height:16px">Total Sales</div>
<div class="t c" style="left:555px;top:345px;font-weight:400;color:#000;letter-spacing:-0.29px;font-size:14px;line-height:16px">&lt;Product Name&gt;</div>
<div class="t c" style="left:670px;top:345px;font-weight:400;color:#000;letter-spacing:-0.4px;font-size:14px;line-height:16px">&lt;Total Sales&gt;</div>
<div class="t c" style="left:555px;top:386px;font-weight:700;color:#000;letter-spacing:0.18px;font-size:14px;line-height:16px">Total:</div>
<div class="t c" style="left:670px;top:386px;font-weight:700;color:#000;letter-spacing:-0.08px;font-size:14px;line-height:16px">$0.00</div>
<div class="t c" style="left:451px;top:426px;font-weight:400;color:#000;letter-spacing:-0.09px;font-size:14px;line-height:16px">&lt;/Country_Level&gt;</div>
<div class="t c" style="left:670px;top:447px;font-weight:700;color:#2f5597;letter-spacing:-0.08px;font-size:14px;line-height:16px">$0.00</div>
<div class="a" style="left:666px;top:442px;width:140px;height:24px;border:2px solid #217346"></div>
<div class="a" style="left:295px;top:740px;width:505px;height:26px;background:#e6e6e6;"></div>
<div class="a" style="left:295px;top:740px;width:505px;height:1px;background:#c4c4c4;"></div>
<svg style="left:320px;top:749px" width="7" height="9" viewBox="0 0 7 9"><path d="M6 0.500 V8.500 L1 4.500 Z" fill="#c0c0c0"/></svg>
<svg style="left:349px;top:749px" width="7" height="9" viewBox="0 0 7 9"><path d="M1 0.500 V8.500 L6 4.500 Z" fill="#c0c0c0"/></svg>
<div class="a" style="left:395px;top:740px;width:65px;height:23px;background:#fff;border-left:1px solid #c4c4c4;border-right:1px solid #c4c4c4"></div>
<div class="a" style="left:395px;top:763px;width:65px;height:2px;background:#217346;"></div>
<div class="t" style="left:406px;top:746px;font-size:13.5px;color:#217346;font-weight:700;letter-spacing:-0.5px;">Sheet1</div>
<svg style="left:493px;top:746px" width="16" height="16" viewBox="0 0 16 16"><circle cx="8" cy="8" r="7.300" fill="none" stroke="#6a6a6a" stroke-width="1.1"/><path d="M4 8 H12 M8 4 V12" stroke="#6a6a6a" stroke-width="1.700"/></svg>
</body></html>
